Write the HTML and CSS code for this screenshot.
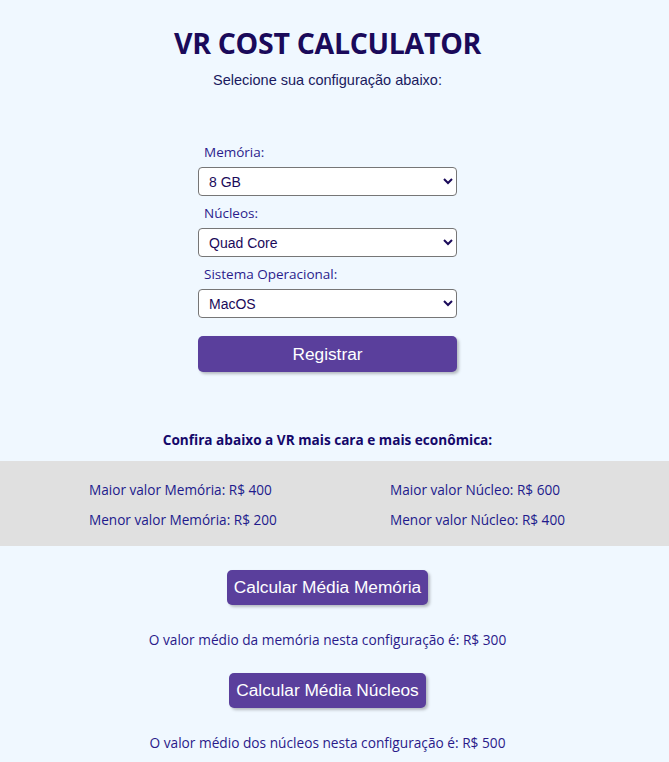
FILE: index.html
```html
<!DOCTYPE html>
<html lang="pt-BR">
<head>
<meta charset="utf-8">
<title>VR Cost Calculator</title>
<link rel="stylesheet" href="styles.css">
</head>
<body>
<main class="page">
  <header class="head">
    <h1 class="title">VR COST CALCULATOR</h1>
    <p class="subtitle">Selecione sua configuração abaixo:</p>
  </header>

  <form class="form">
    <label class="label" for="mem">Memória:</label>
    <select class="select" id="mem"><option>8 GB</option></select>
    <label class="label" for="nuc">Núcleos:</label>
    <select class="select" id="nuc"><option>Quad Core</option></select>
    <label class="label" for="so">Sistema Operacional:</label>
    <select class="select" id="so"><option>MacOS</option></select>
    <button type="button" class="btn btn-wide">Registrar</button>
  </form>

  <h2 class="section-title">Confira abaixo a VR mais cara e mais econômica:</h2>
</main>

<section class="band">
  <div class="band-grid">
    <p class="band-item">Maior valor Memória: R$ 400</p>
    <p class="band-item">Maior valor Núcleo: R$ 600</p>
    <p class="band-item">Menor valor Memória: R$ 200</p>
    <p class="band-item">Menor valor Núcleo: R$ 400</p>
  </div>
</section>

<main class="page results">
  <button type="button" class="btn">Calcular Média Memória</button>
  <p class="result">O valor médio da memória nesta configuração é: R$ 300</p>
  <button type="button" class="btn">Calcular Média Núcleos</button>
  <p class="result">O valor médio dos núcleos nesta configuração é: R$ 500</p>
</main>
</body>
</html>
```

FILE: styles.css
```css
html, body {
  margin: 0;
  padding: 0;
  background: #f0f8ff;
}

body {
  font-family: "Open Sans", "Noto Sans", sans-serif;
  color: #1d0f6b;
}

.page {
  width: 655px;
  display: flex;
  flex-direction: column;
  align-items: center;
}

.head {
  display: flex;
  flex-direction: column;
  align-items: center;
  padding-top: 23px;
}

.title {
  margin: 0;
  font-family: "Open Sans", sans-serif;
  font-weight: 700;
  font-size: 28.5px;
  line-height: 40px;
  color: #1a0a5a;
  letter-spacing: -0.3px;
}

.subtitle {
  margin: 8px 0 0;
  font-family: "Liberation Sans", Arial, sans-serif;
  font-size: 14.5px;
  line-height: 18px;
  color: #1a1a5e;
}

.form {
  width: 259px;
  display: flex;
  flex-direction: column;
  margin-top: 54px;
}

.label {
  font-size: 13.5px;
  line-height: 18px;
  color: #2b1c8c;
  padding-left: 6px;
  margin-bottom: 6px;
}

.select {
  height: 29px;
  width: 259px;
  box-sizing: border-box;
  margin: 0 0 8px;
  padding: 0 6px;
  border: 1px solid #767676;
  border-radius: 4px;
  background: #ffffff;
  font-family: "Liberation Sans", Arial, sans-serif;
  font-size: 14px;
  color: #1a0a5a;
}

.btn {
  font-family: "Liberation Sans", Arial, sans-serif;
  font-size: 17.3px;
  color: #ffffff;
  background: #5a3f9c;
  border: none;
  border-radius: 5px;
  box-shadow: 2px 2px 3px rgba(0, 0, 0, 0.25);
  padding: 0 7px;
  height: 35px;
  cursor: pointer;
}

.btn-wide {
  width: 259px;
  height: 36px;
  margin-top: 10px;
}

.section-title {
  margin: 59px 0 0;
  font-size: 13.6px;
  line-height: 18px;
  font-weight: 700;
  color: #14086a;
}

.band {
  margin-top: 12px;
  background: #e0e0e0;
  width: 100%;
  padding: 20px 0 17px;
}

.band-grid {
  display: grid;
  grid-template-columns: 301px 1fr;
  row-gap: 12px;
  padding-left: 89px;
}

.band-item {
  margin: 0;
  font-size: 13.6px;
  line-height: 18px;
  color: #211a8c;
}

.results {
  padding-top: 24px;
}

.result {
  margin: 26px 0 24px;
  font-size: 13.7px;
  line-height: 18px;
  color: #2a1a8a;
}
```
